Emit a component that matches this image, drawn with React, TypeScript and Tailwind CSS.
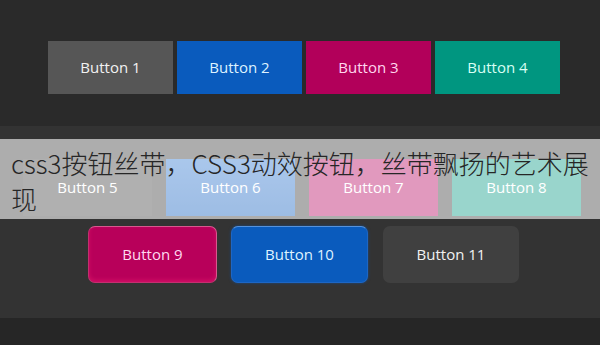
import React from 'react';

const topRow = [
  { label: 'Button 1', cls: 'bg-[#565656] text-[#f2f2f2]' },
  { label: 'Button 2', cls: 'bg-[#0a5bbd] text-[#dff3ff]' },
  { label: 'Button 3', cls: 'bg-[#b2005a] text-[#ffd6ee]' },
  { label: 'Button 4', cls: 'bg-[#009680] text-[#d8fff4]' },
];

const midRow = [
  { label: 'Button 5', cls: 'bg-[#3b3b3b]' },
  { label: 'Button 6', cls: 'bg-[#0e5fc2] bg-gradient-to-b from-[#2a74cf] to-[#0a59bb]' },
  { label: 'Button 7', cls: 'bg-[#b5005c]' },
  { label: 'Button 8', cls: 'bg-[#00977f]' },
];

const App = () => {
  return (
    <div className="w-[600px] h-[345px] overflow-hidden bg-[#2a2a2a] font-['Open_Sans',sans-serif]">
      {/* flat buttons */}
      <div className="h-[126px] pt-[41px] pl-[48px] flex gap-[4px]">
        {topRow.map((b) => (
          <div key={b.label} className={`w-[125px] h-[53px] flex items-center justify-center text-[15px] ${b.cls}`}>
            {b.label}
          </div>
        ))}
      </div>

      {/* demo area with caption ribbon */}
      <div className="relative h-[192px] bg-[#333333] pt-[33px]">
        <div className="flex gap-[14px] pl-[23px]">
          {midRow.map((b) => (
            <div key={b.label} className={`w-[129px] h-[57px] flex items-center justify-center text-[15px] text-white ${b.cls}`}>
              {b.label}
            </div>
          ))}
        </div>

        <div className="flex mt-[10px] pl-[88px]">
          <div className="w-[129px] h-[57px] rounded-[7px] bg-[#b8005a] border border-[#c2306f] border-t-[#d8588e] border-r-[#d8588e] shadow-[inset_0_-2px_4px_rgba(255,40,120,0.35)] flex items-center justify-center text-[15px] text-[#ffd8f0]">
            Button 9
          </div>
          <div className="ml-[14px] w-[137px] h-[57px] rounded-[7px] bg-[#0a5bbd] border border-[#1d66c4] border-t-[#5592dc] shadow-[0_0_3px_rgba(10,90,190,0.6)] flex items-center justify-center text-[15px] text-[#dff3ff]">
            Button 10
          </div>
          <div className="ml-[15px] w-[136px] h-[57px] rounded-[7px] bg-[#404040] flex items-center justify-center text-[15px] text-[#f2f2f2]">
            Button 11
          </div>
        </div>

        <div className="absolute left-0 right-0 top-[13px] h-[80px] bg-[rgba(255,255,255,0.6)] pt-[6px] pl-[11px] pr-[8px] text-[26px] leading-[36px] font-light text-[#262626] font-['Noto_Sans_CJK_SC','Noto_Sans',sans-serif]">
          css3按钮丝带，CSS3动效按钮，丝带飘扬的艺术展现
        </div>
      </div>

      <div className="h-[27px] bg-[#262626]" />
    </div>
  );
};

export default App;
